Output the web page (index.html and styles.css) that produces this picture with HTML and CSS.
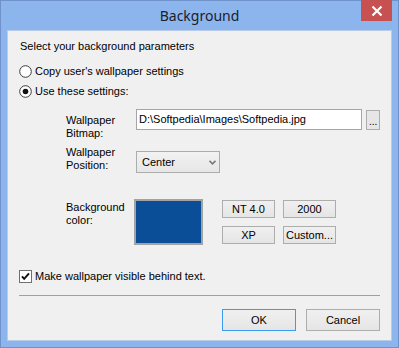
FILE: index.html
```html
<!DOCTYPE html>
<html>
<head>
<meta charset="utf-8">
<link rel="stylesheet" href="styles.css">
</head>
<body>
<div class="window">
  <div class="titlebar">
    <span class="title">Background</span>
    <div class="close">
      <svg width="12" height="12" viewBox="0 0 12 12"><path d="M1.5 1.5 L10.5 10.5 M10.5 1.5 L1.5 10.5" stroke="#fff" stroke-width="2.2" fill="none"/></svg>
    </div>
  </div>
  <div class="client">
    <div class="line heading">Select your background parameters</div>
    <div class="line radio-row r1">
      <svg class="radio" width="13" height="13" viewBox="0 0 13 13"><circle cx="6.5" cy="6.5" r="5.8" fill="#fff" stroke="#3c3c3c" stroke-width="1"/></svg>
      <span>Copy user's wallpaper settings</span>
    </div>
    <div class="line radio-row r2">
      <svg class="radio" width="13" height="13" viewBox="0 0 13 13"><circle cx="6.5" cy="6.5" r="5.8" fill="#fff" stroke="#3c3c3c" stroke-width="1"/><circle cx="6.5" cy="6.5" r="2.8" fill="#111"/></svg>
      <span>Use these settings:</span>
    </div>

    <div class="settings">
      <div class="row row-bitmap">
        <div class="label">Wallpaper<br>Bitmap:</div>
        <div class="path">D:\Softpedia\Images\Softpedia.jpg</div>
        <div class="browse">...</div>
      </div>
      <div class="row row-position">
        <div class="label">Wallpaper<br>Position:</div>
        <div class="select">
          <span>Center</span>
          <svg width="7" height="5" viewBox="0 0 7 5"><path d="M0.5 0.8 L3.5 3.8 L6.5 0.8" stroke="#7a7a7a" stroke-width="1.6" fill="none"/></svg>
        </div>
      </div>
      <div class="row row-color">
        <div class="label">Background<br>color:</div>
        <div class="swatch"></div>
        <div class="presets">
          <div class="btn small">NT 4.0</div>
          <div class="btn small">2000</div>
          <div class="btn small">XP</div>
          <div class="btn small">Custom...</div>
        </div>
      </div>
    </div>

    <div class="line check-row">
      <svg class="check" width="13" height="13" viewBox="0 0 13 13"><rect x="0.5" y="0.5" width="12" height="12" fill="#fff" stroke="#707070"/><path d="M3 6.3 L5.2 8.8 L10 3.4" stroke="#111" stroke-width="2" fill="none"/></svg>
      <span>Make wallpaper visible behind text.</span>
    </div>
    <div class="separator"></div>
    <div class="actions">
      <div class="btn big default">OK</div>
      <div class="btn big">Cancel</div>
    </div>
  </div>
</div>
</body>
</html>
```
FILE: styles.css
```css
html, body {
  margin: 0;
  padding: 0;
}
body {
  width: 399px;
  height: 348px;
  overflow: hidden;
  font-family: "Liberation Sans", Arial, sans-serif;
  font-size: 11px;
  color: #000;
}
.window {
  position: relative;
  width: 399px;
  height: 348px;
  box-sizing: border-box;
  border: 1px solid #6f93c8;
  background: #8bb5ec;
  padding: 0 6px 6px;
  display: flex;
  flex-direction: column;
}
.titlebar {
  height: 29px;
  display: flex;
  align-items: flex-start;
  justify-content: center;
}
.title {
  font-family: "Noto Sans", "Open Sans", sans-serif;
  font-size: 14px;
  line-height: 20px;
  margin-top: 5px;
  color: #1c1c2c;
}
.close {
  position: absolute;
  top: -1px;
  right: 6px;
  width: 31px;
  height: 21px;
  background: #c75050;
  display: flex;
  align-items: center;
  justify-content: center;
}
.client {
  flex: 1;
  border: 1px solid #b9cbe6;
  background: #f0f0f0;
  padding: 9px 11px 0;
  display: flex;
  flex-direction: column;
}
.line {
  height: 13px;
  line-height: 13px;
  white-space: nowrap;
}
.heading {
  padding-left: 1px;
}
.radio-row, .check-row {
  display: flex;
  align-items: center;
  gap: 3px;
}
.radio, .check {
  flex: none;
}
.r1 { margin-top: 12px; }
.r2 { margin-top: 7px; }

.settings {
  padding-left: 47px;
  display: flex;
  flex-direction: column;
}
.row {
  display: flex;
  align-items: flex-start;
}
.label {
  width: 70px;
  flex: none;
  line-height: 13px;
}
.row-bitmap { margin-top: 11px; }
.row-bitmap .label { margin-top: 5px; }
.path {
  width: 224px;
  height: 19px;
  border: 1px solid #a5a5a5;
  background: #fff;
  line-height: 19px;
  padding-left: 2px;
  white-space: nowrap;
  overflow: hidden;
}
.browse {
  margin-left: 4px;
  margin-top: 1px;
  width: 12px;
  height: 18px;
  border: 1px solid #adadad;
  background: #e6e6e6;
  line-height: 22px;
  text-align: center;
  font-size: 10px;
}
.row-position { margin-top: 6px; }
.select {
  margin-top: 5px;
  width: 74px;
  height: 20px;
  border: 1px solid #acacac;
  background: linear-gradient(#f2f2f2, #e6e6e6);
  display: flex;
  align-items: center;
  justify-content: space-between;
  padding: 0 3px 0 5px;
}
.select svg { margin-top: 1px; }
.row-color { margin-top: 26px; }
.row-color .label { margin-top: 2px; }
.swatch {
  margin-left: -2px;
  width: 65px;
  height: 42px;
  border: 2px solid #a3a3a3;
  background: #0a4e98;
  flex: none;
}
.presets {
  margin-left: 19px;
  margin-top: 1px;
  display: grid;
  grid-template-columns: 53px 53px;
  grid-auto-rows: 18px;
  column-gap: 8px;
  row-gap: 8px;
}
.btn {
  box-sizing: border-box;
  border: 1px solid #adadad;
  background: linear-gradient(#f0f0f0, #e5e5e5);
  display: flex;
  align-items: center;
  justify-content: center;
  white-space: nowrap;
}
.check-row { margin-top: 25px; }
.separator {
  margin-top: 12px;
  height: 1px;
  background: #a0a0a0;
}
.actions {
  margin-top: 13px;
  display: flex;
  justify-content: flex-end;
  gap: 10px;
}
.btn.big {
  width: 74px;
  height: 22px;
}
.btn.default {
  border-color: #3c9af0;
}
```
